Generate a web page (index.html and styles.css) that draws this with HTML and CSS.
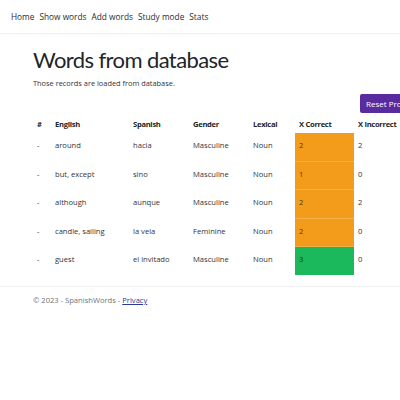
FILE: index.html
```html
<!DOCTYPE html>
<html>
<head>
<meta charset="utf-8">
<link rel="stylesheet" href="styles.css">
</head>
<body>
<header class="navbar">
  <nav class="nav">
    <a class="nav-link" href="#">Home</a>
    <a class="nav-link" href="#">Show words</a>
    <a class="nav-link" href="#">Add words</a>
    <a class="nav-link" href="#">Study mode</a>
    <a class="nav-link" href="#">Stats</a>
  </nav>
</header>
<main class="container">
  <h1 class="title">Words from database</h1>
  <p class="subtitle">Those records are loaded from database.</p>
  <div class="actions">
    <button class="btn-reset">Reset Progress</button>
  </div>
  <table class="words">
    <colgroup>
      <col class="c-num"><col class="c-en"><col class="c-es"><col class="c-gen"><col class="c-lex"><col class="c-ok"><col class="c-bad">
    </colgroup>
    <thead>
      <tr><th>#</th><th>English</th><th>Spanish</th><th>Gender</th><th>Lexical</th><th>X Correct</th><th>X Incorrect</th></tr>
    </thead>
    <tbody>
      <tr><td>-</td><td>around</td><td>hacia</td><td>Masculine</td><td>Noun</td><td class="warn">2</td><td>2</td></tr>
      <tr><td>-</td><td>but, except</td><td>sino</td><td>Masculine</td><td>Noun</td><td class="warn">1</td><td>0</td></tr>
      <tr><td>-</td><td>although</td><td>aunque</td><td>Masculine</td><td>Noun</td><td class="warn">2</td><td>2</td></tr>
      <tr><td>-</td><td>candle, sailing</td><td>la vela</td><td>Feminine</td><td>Noun</td><td class="warn">2</td><td>0</td></tr>
      <tr><td>-</td><td>guest</td><td>el invitado</td><td>Masculine</td><td>Noun</td><td class="good">3</td><td>0</td></tr>
    </tbody>
  </table>
</main>
<footer class="footer">
  <div class="footer-inner">© 2023 - SpanishWords - <a href="#" class="footer-link">Privacy</a></div>
</footer>
</body>
</html>
```
FILE: styles.css
```css
* { box-sizing: border-box; }
html, body { margin: 0; padding: 0; }
body {
  font-family: "Open Sans", "Noto Sans", sans-serif;
  color: #212529;
  background: #fff;
  width: 400px;
  overflow: hidden;
}
.navbar {
  height: 34px;
  border-bottom: 1px solid #f1f1f1;
  box-shadow: 0 1px 2px rgba(0,0,0,0.03);
  display: flex;
  align-items: center;
  padding-left: 11px;
}
.nav { display: flex; gap: 5px; }
.nav-link {
  font-size: 8.3px;
  color: #2b2b2b;
  text-decoration: none;
}
.container {
  padding: 11px 0 0 33px;
}
.title {
  font-family: Lato, "Open Sans", sans-serif;
  font-size: 22px;
  font-weight: 400;
  margin: 0;
  line-height: 30px;
  letter-spacing: -0.6px;
}
.subtitle {
  font-size: 7.4px;
  margin: 3px 0 0;
  color: #333;
}
.actions {
  display: flex;
  justify-content: flex-end;
  margin-top: 6px;
}
.btn-reset {
  margin-right: -60px;
  width: 100px;
  height: 19px;
  border: none;
  border-radius: 2px;
  background: #5a2b9e;
  color: #fff;
  font-family: inherit;
  font-size: 8px;
  text-align: left;
  padding: 0 6px;
}
.words {
  border-collapse: collapse;
  table-layout: fixed;
  width: 400px;
  font-size: 7.6px;
  margin-top: 1px;
}
.c-num { width: 18px; }
.c-en { width: 78px; }
.c-es { width: 60px; }
.c-gen { width: 60px; }
.c-lex { width: 46px; }
.c-ok { width: 59px; }
.c-bad { width: 79px; }
.words th {
  text-align: left;
  font-weight: 700;
  height: 19px;
  padding: 0 4px;
  white-space: nowrap;
  vertical-align: middle;
  letter-spacing: -0.3px;
}
.words td {
  height: 28.4px;
  padding: 0 4px 3px;
  vertical-align: middle;
  white-space: nowrap;
  color: #333;
  border-bottom: 1px solid transparent;
}
.words td.warn {
  background: #f39c1c;
  border-bottom: 1px solid #f5b04a;
  color: #5a3a00;
}
.words td.good {
  background: #1cb85c;
  border-bottom: 1px solid #1cb85c;
  color: #0a4020;
}
.footer {
  margin-top: 11px;
  border-top: 1px solid #f0f0f0;
  height: 26px;
  display: flex;
  align-items: center;
  padding-left: 33px;
}
.footer-inner {
  font-size: 7.6px;
  color: #6c757d;
}
.footer-link { color: #2a3a9a; }
```
